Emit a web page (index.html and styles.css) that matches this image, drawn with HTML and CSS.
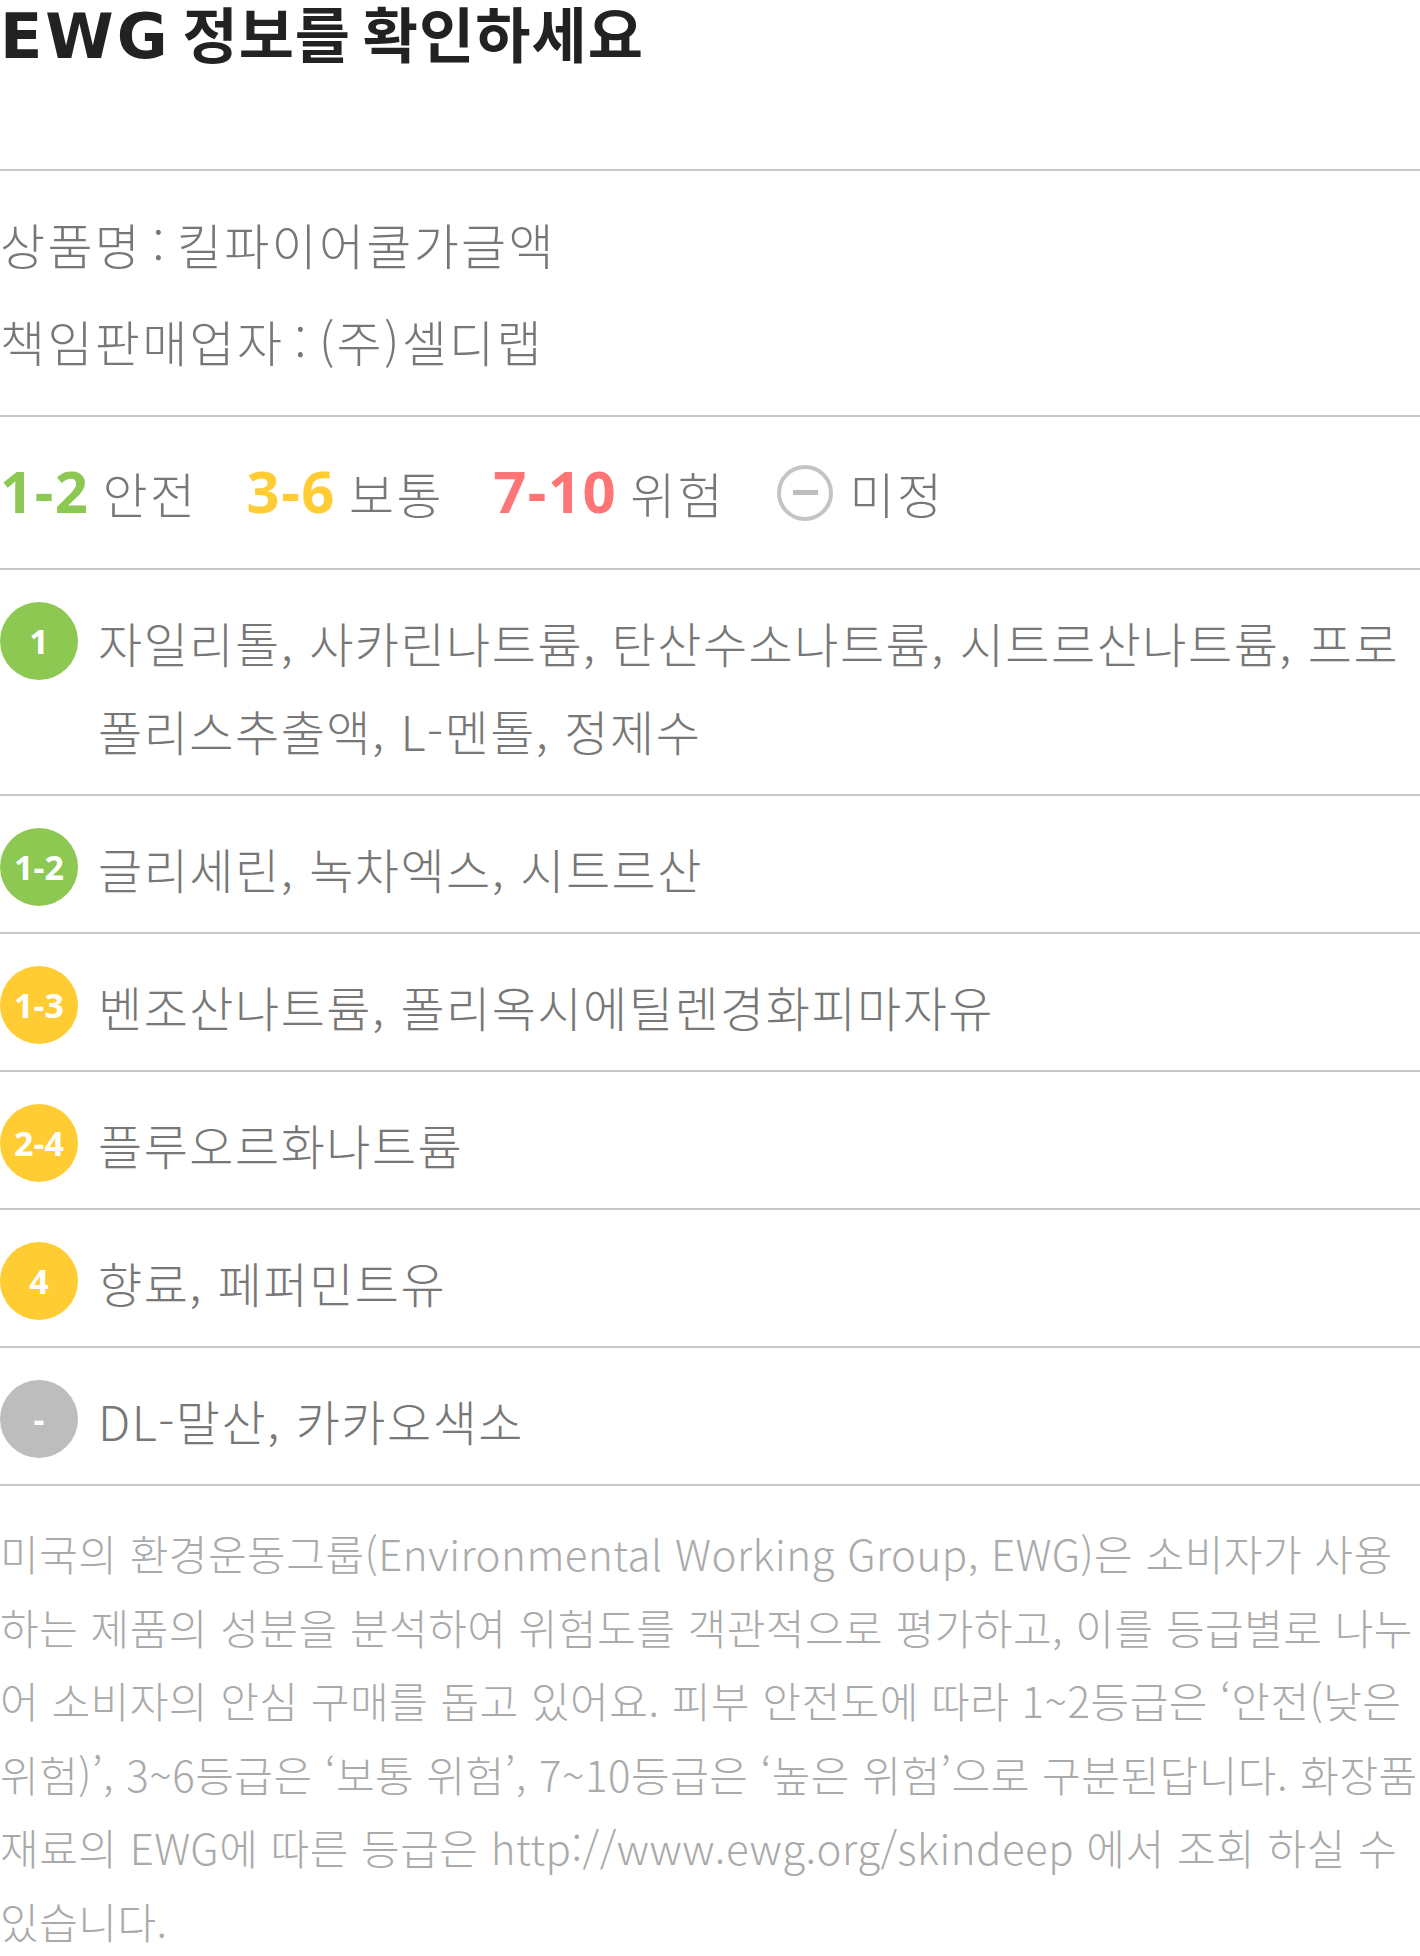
FILE: index.html
```html
<!DOCTYPE html>
<html lang="ko">
<head>
    <meta charset="UTF-8">
    <meta name="viewport" content="width=device-width, initial-scale=1.0">
    <title>EWG 정보</title>
    <link rel="stylesheet" href="styles.css">
</head>
<body>

    <div class="ewg-container">
        <div class="title-box">
            <h1><span class="title-en">EWG</span> 정보를 확인하세요</h1>
        </div>

        <div class="product-info">
            <p>상품명 : 킬파이어쿨가글액</p>
            <p>책임판매업자 : (주)셀디랩</p>
        </div>

        <div class="legend">
            <div class="legend-item">
                <span class="legend-num safe">1-2</span>
                <span class="legend-label">안전</span>
            </div>
            <div class="legend-item">
                <span class="legend-num normal">3-6</span>
                <span class="legend-label">보통</span>
            </div>
            <div class="legend-item">
                <span class="legend-num danger">7-10</span>
                <span class="legend-label">위험</span>
            </div>
            <div class="legend-item">
                <span class="legend-none"><i></i></span>
                <span class="legend-label">미정</span>
            </div>
        </div>

        <ul class="ingredient-list">
            <li class="ingredient">
                <span class="grade safe">1</span>
                <span class="ingredient-name">자일리톨, 사카린나트륨, 탄산수소나트륨, 시트르산나트륨, 프로폴리스추출액, L-멘톨, 정제수</span>
            </li>
            <li class="ingredient">
                <span class="grade safe">1-2</span>
                <span class="ingredient-name">글리세린, 녹차엑스, 시트르산</span>
            </li>
            <li class="ingredient">
                <span class="grade normal">1-3</span>
                <span class="ingredient-name">벤조산나트륨, 폴리옥시에틸렌경화피마자유</span>
            </li>
            <li class="ingredient">
                <span class="grade normal">2-4</span>
                <span class="ingredient-name">플루오르화나트륨</span>
            </li>
            <li class="ingredient">
                <span class="grade normal">4</span>
                <span class="ingredient-name">향료, 페퍼민트유</span>
            </li>
            <li class="ingredient">
                <span class="grade none">-</span>
                <span class="ingredient-name">DL-말산, 카카오색소</span>
            </li>
        </ul>

        <p class="ewg-note">미국의 환경운동그룹(Environmental Working Group, EWG)은 소비자가 사용하는 제품의 성분을 분석하여 위험도를 객관적으로 평가하고, 이를 등급별로 나누어 소비자의 안심 구매를 돕고 있어요. 피부 안전도에 따라 1~2등급은 ‘안전(낮은 위험)’, 3~6등급은 ‘보통 위험’, 7~10등급은 ‘높은 위험’으로 구분된답니다. 화장품 재료의 EWG에 따른 등급은 http://www.ewg.org/skindeep 에서 조회 하실 수 있습니다.</p>
    </div>

</body>
</html>
```

FILE: styles.css
```css
body {
    margin: 0;
    background-color: #fff;
    font-family: "Noto Sans CJK KR", "Noto Sans", sans-serif;
    color: #777;
}

.ewg-container {
    width: 1420px;
}

.title-box {
    height: 169px;
    border-bottom: 2px solid #c8c8c8;
}

.title-box h1 {
    margin: 0;
    padding-top: 2px;
    font-size: 60px;
    line-height: 60px;
    font-weight: 700;
    letter-spacing: 1px;
    word-spacing: -6px;
    color: #222;
}

.title-en {
    font-family: "DejaVu Sans", sans-serif;
    font-size: 62px;
    letter-spacing: 3px;
}

.product-info {
    padding: 24px 0 26px;
    border-bottom: 2px solid #c8c8c8;
}

.product-info p {
    margin: 0;
    font-size: 49px;
    font-weight: 300;
    letter-spacing: 2.3px;
    word-spacing: -6px;
    line-height: 97px;
}

.legend {
    display: flex;
    align-items: center;
    height: 151px;
    gap: 49px;
    border-bottom: 2px solid #c8c8c8;
}

.legend-item {
    display: flex;
    align-items: center;
    gap: 13px;
}

.legend-num {
    font-family: "Noto Sans", sans-serif;
    font-size: 58px;
    font-weight: 700;
    letter-spacing: 1.5px;
    line-height: 1;
    margin-top: -4px;
}

.legend-label {
    font-size: 49px;
    font-weight: 300;
    letter-spacing: 2.5px;
    line-height: 1;
}

.legend-none {
    width: 48px;
    height: 48px;
    border: 4px solid #c4c4c4;
    border-radius: 50%;
    display: flex;
    align-items: center;
    justify-content: center;
    margin-left: 3px;
    margin-right: 3px;
}

.legend-none i {
    width: 25px;
    height: 5px;
    background-color: #bdbdbd;
}

.safe { color: #8dc853; }
.normal { color: #ffcc33; }
.danger { color: #ff7474; }

.ingredient-list {
    list-style: none;
    margin: 0;
    padding: 0;
}

.ingredient {
    display: flex;
    align-items: flex-start;
    gap: 20px;
    padding: 28px 0 20px;
    border-bottom: 2px solid #c8c8c8;
}

.grade {
    flex: none;
    width: 78px;
    height: 78px;
    margin-top: 4px;
    border-radius: 50%;
    display: flex;
    align-items: center;
    justify-content: center;
    font-family: "Noto Sans", sans-serif;
    font-size: 34px;
    font-weight: 700;
    color: #fff;
}

.grade.safe { background-color: #8dc853; }
.grade.normal { background-color: #ffcc33; }
.grade.none { background-color: #bdbdbd; }

.ingredient-name {
    font-size: 48px;
    font-weight: 300;
    letter-spacing: 1.5px;
    line-height: 88px;
}

.ewg-note {
    margin: 0;
    padding-top: 30px;
    font-size: 42px;
    font-weight: 300;
    letter-spacing: 0.5px;
    line-height: 73.5px;
    color: #aaa;
}
```
